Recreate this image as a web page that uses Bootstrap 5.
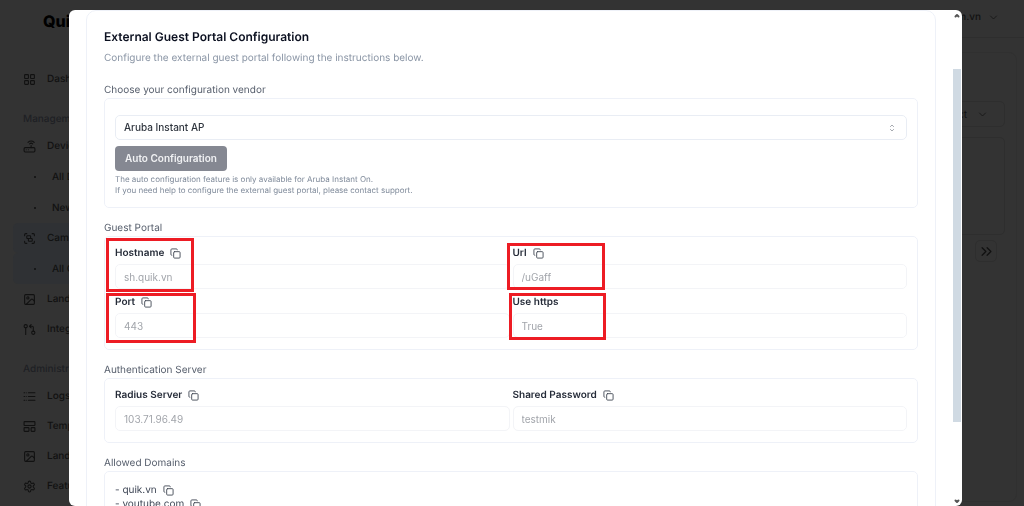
<!DOCTYPE html>
<html lang="en">
<head>
<meta charset="utf-8">
<meta name="viewport" content="width=device-width, initial-scale=1">
<title>External Guest Portal Configuration</title>
<link href="https://cdn.jsdelivr.net/npm/bootstrap@5.3.0/dist/css/bootstrap.min.css" rel="stylesheet">
<style>
  body { font-family: Inter, "Liberation Sans", sans-serif; font-size: 10px; line-height: 16px; background: #333; color: #111; overflow: hidden; text-rendering: geometricPrecision; }
  svg { fill: none; stroke: currentColor; stroke-width: 2; stroke-linecap: round; stroke-linejoin: round; flex: none; }
  a { color: inherit; text-decoration: none; }

  /* dimmed page */
  .side { width: 200px; padding: 0 13px; font-weight: 500; }
  .brand { font-size: 16px; font-weight: 800; line-height: 24px; margin: 9px 0 31px 30px; color: #000; }
  .side-item { height: 30px; gap: 11px; padding-left: 10px; border-radius: 5px; white-space: nowrap; }
  .side-sub { height: 31px; gap: 16px; padding-left: 21px; border-radius: 5px; white-space: nowrap; }
  .side-sub::before { content: ""; width: 2px; height: 2px; border-radius: 50%; background: currentColor; }
  .current { background: #2f3134; }
  .side-head { margin: 17px 0 4px 10px; color: #1e2024; }
  .topbar { height: 38px; padding: 0 26px 3px 0; border-bottom: 1px solid #2e2e2e; font-weight: 500; }
  .page-card { margin: 14px 7px 4px; padding: 48px 11px 0; border: 1px solid #303030; border-radius: 8px; }
  .dim-box { border: 1px solid #2e2e2e; border-radius: 5px; background: none; color: inherit; }
  .filter { height: 26px; width: 90px; padding: 0 17px; gap: 11px; }
  .listing { height: 98px; margin: 10px 0 5px; }
  .pager { width: 22px; height: 22px; padding: 0; }

  /* dialog */
  .dialog-wrap { position: fixed; inset: 10px 62px 0 69px; }
  .dialog { background: #fff; border-radius: 6px; color: #3f4756; }
  .dialog-body { padding: 0 16px 0 17px; }
  .panel { border: 1px solid #eef1f8; border-radius: 10px; padding: 17px 17px 0; min-height: 760px; }
  h1 { font-size: 12px; line-height: 18px; font-weight: 600; color: #0b1020; margin: 0 0 4px; }
  .intro { color: #8a95a5; margin: 0 0 16px; }
  fieldset { margin-bottom: 12px; }
  legend { font-size: 10px; line-height: 16px; margin: 0; color: #565e6c; float: none; }
  .box { border: 1px solid #eef1f8; border-radius: 5px; padding: 8px 10px 11px; }
  .pick { padding-top: 16px; }
  .form-control, .form-select { font-size: 10px; line-height: 15px; height: 25px; padding: 4px 8px; border: 1px solid #f3f4f7; border-radius: 5px; }
  .form-control:disabled { background: #fff; color: #a2a5ab; opacity: 1; }
  .form-select { color: #30363f; font-weight: 500; border-color: #e9edf4; background-size: 6px 8px; background-position: right 11px center;
    background-image: url("data:image/svg+xml,%3Csvg xmlns='http://www.w3.org/2000/svg' viewBox='0 0 8 10' fill='none' stroke='%23888d96'%3E%3Cpath d='M1.5 3.5 4 1l2.500 2.500M1.500 6.500 4 9l2.500-2.500'/%3E%3C/svg%3E"); }
  .btn-auto, .btn-auto:disabled { font-size: 10px; line-height: 15px; font-weight: 600; height: 25px; padding: 4px 10px; margin: 6px 0 3px; border: 0; border-radius: 4px; background: #858892; color: #f1f2f4; opacity: 1; }
  .hint { font-size: 8px; line-height: 11px; color: #7f8a9a; margin: 0; }
  .fields { display: grid; grid-template-columns: 1fr 1fr; gap: 5px 3px; }
  .field-label { font-weight: 600; color: #252b38; line-height: 16px; }
  .label-row { gap: 6px; margin-bottom: 3px; height: 16px; }
  .copy { border: 0; background: none; padding: 0; display: flex; color: #454b58; }
  .domains { padding-top: 11px; }
  .domains li { gap: 6px; height: 14px; }

  /* red annotation frames drawn over the fields */
  .frame { position: absolute; border: 3px solid #ed1c24; pointer-events: none; }
  .frame-host { left: -9px; top: -7px; width: 88px; height: 54px; }
  .frame-port { left: -9px; top: -1px; width: 90px; height: 50px; }
  .frame-url { left: -6px; top: -2px; width: 98px; height: 47px; }
  .frame-https { left: -4px; top: -1px; width: 97px; height: 47px; }

  .scroller { width: 10px; padding: 3px 1px 2px 0; color: #555; }
  .track { min-height: 0; padding-top: 51px; }
  .thumb { width: 8px; height: 82%; background: #d0dae3; }
</style>
</head>
<body>
<svg class="d-none" aria-hidden="true">
  <symbol id="copy" viewBox="0 0 24 24"><rect x="8" y="8" width="14" height="14" rx="2"/><path d="M4 16c-1.100 0-2-.9-2-2V4c0-1.100.9-2 2-2h10c1.100 0 2 .9 2 2"/></symbol>
  <symbol id="picture" viewBox="0 0 24 24"><rect x="3" y="3" width="18" height="18" rx="2"/><circle cx="9" cy="9" r="2"/><path d="m21 15-3.100-3.100a2 2 0 0 0-2.800 0L6 21"/></symbol>
  <symbol id="down" viewBox="0 0 24 24"><path d="m4 8 8 8 8-8"/></symbol>
</svg>

<div class="d-flex vh-100">
  <nav class="side" aria-label="Main">
    <div class="brand">Quik</div>
    <a href="#" class="side-item d-flex align-items-center"><svg width="13" height="13" viewBox="0 0 24 24"><rect x="3" y="3" width="7" height="7" rx="1"/><rect x="14" y="3" width="7" height="7" rx="1"/><rect x="14" y="14" width="7" height="7" rx="1"/><rect x="3" y="14" width="7" height="7" rx="1"/></svg>Dashboard</a>
    <div class="side-head">Management</div>
    <a href="#" class="side-item d-flex align-items-center"><svg width="13" height="13" viewBox="0 0 24 24"><rect x="2" y="14" width="20" height="8" rx="2"/><path d="M6 18h.01M10 18h.01M15 10v4M17.800 7.200a4 4 0 0 0-5.600 0M20.600 4.300a8 8 0 0 0-11.300 0"/></svg>Devices</a>
    <a href="#" class="side-sub d-flex align-items-center">All Devices</a>
    <a href="#" class="side-sub d-flex align-items-center">New Device</a>
    <a href="#" class="side-item current d-flex align-items-center"><svg width="13" height="13" viewBox="0 0 24 24"><path d="M3 7V5a2 2 0 0 1 2-2h2M17 3h2a2 2 0 0 1 2 2v2M21 17v2a2 2 0 0 1-2 2h-2M7 21H5a2 2 0 0 1-2-2v-2"/><rect x="7" y="7" width="7" height="5" rx="1"/><rect x="10" y="12" width="7" height="5" rx="1"/></svg>Campaigns</a>
    <a href="#" class="side-sub current d-flex align-items-center">All Camp.</a>
    <a href="#" class="side-item d-flex align-items-center"><svg width="13" height="13"><use href="#picture"/></svg>Landing</a>
    <a href="#" class="side-item d-flex align-items-center"><svg width="13" height="13" viewBox="0 0 24 24"><circle cx="5" cy="6" r="3"/><path d="M5 9v12M12 6h5a2 2 0 0 1 2 2v7M15 3l-3 3 3 3"/><circle cx="19" cy="18" r="3"/></svg>Integrations</a>
    <div class="side-head">Administration</div>
    <a href="#" class="side-item d-flex align-items-center"><svg width="13" height="13" viewBox="0 0 24 24"><path d="M10 5h12M10 12h12M10 19h12M2 5h1M2 12h1M2 19h1M6 5h.01M6 12h.01M6 19h.01"/></svg>Logs</a>
    <a href="#" class="side-item d-flex align-items-center"><svg width="13" height="13" viewBox="0 0 24 24"><rect x="2" y="3" width="20" height="7" rx="1"/><rect x="2" y="14" width="9" height="7" rx="1"/><rect x="15" y="14" width="7" height="7" rx="1"/></svg>Templates</a>
    <a href="#" class="side-item d-flex align-items-center"><svg width="13" height="13"><use href="#picture"/></svg>Landing</a>
    <a href="#" class="side-item d-flex align-items-center"><svg width="13" height="13" viewBox="0 0 24 24"><path d="M12.200 2h-.4a2 2 0 0 0-2 2v.2a2 2 0 0 1-1 1.700l-.4.3a2 2 0 0 1-2 0l-.2-.1a2 2 0 0 0-2.700.7l-.2.400a2 2 0 0 0 .7 2.700l.2.100a2 2 0 0 1 1 1.700v.5a2 2 0 0 1-1 1.800l-.2.100a2 2 0 0 0-.7 2.700l.2.400a2 2 0 0 0 2.700.7l.2-.1a2 2 0 0 1 2 0l.4.300a2 2 0 0 1 1 1.700v.2a2 2 0 0 0 2 2h.4a2 2 0 0 0 2-2v-.2a2 2 0 0 1 1-1.700l.4-.3a2 2 0 0 1 2 0l.2.100a2 2 0 0 0 2.700-.7l.2-.4a2 2 0 0 0-.7-2.700l-.2-.1a2 2 0 0 1-1-1.800v-.5a2 2 0 0 1 1-1.700l.2-.1a2 2 0 0 0 .7-2.700l-.2-.4a2 2 0 0 0-2.700-.7l-.2.100a2 2 0 0 1-2 0l-.4-.3a2 2 0 0 1-1-1.700V4a2 2 0 0 0-2-2z"/><circle cx="12" cy="12" r="3"/></svg>Features</a>
  </nav>
  <main class="flex-grow-1 d-flex flex-column">
    <div class="topbar d-flex align-items-center justify-content-end gap-2"><span>m.vn</span><svg width="9" height="9" viewBox="0 0 24 24" stroke-width="3"><use href="#down"/></svg></div>
    <div class="page-card flex-grow-1">
      <div class="d-flex justify-content-end"><button type="button" class="dim-box filter d-flex align-items-center justify-content-end">Select<svg width="9" height="9"><use href="#down"/></svg></button></div>
      <div class="dim-box listing"></div>
      <div class="d-flex justify-content-end pe-2"><button type="button" aria-label="Last page" class="dim-box pager d-flex align-items-center justify-content-center"><svg width="15" height="15" viewBox="0 0 24 24"><path d="m5 18 6-6-6-6M13 18l6-6-6-6"/></svg></button></div>
    </div>
  </main>
</div>

<div class="dialog-wrap d-flex">
  <div class="dialog d-flex w-100 overflow-hidden" role="dialog" aria-labelledby="dialogTitle">
    <form class="dialog-body flex-grow-1">
      <div class="panel">
        <h1 id="dialogTitle">External Guest Portal Configuration</h1>
        <p class="intro">Configure the external guest portal following the instructions below.</p>

        <fieldset>
          <legend><label for="vendor">Choose your configuration vendor</label></legend>
          <div class="box pick">
            <select class="form-select" id="vendor"><option>Aruba Instant AP</option></select>
            <button type="button" class="btn btn-auto" disabled>Auto Configuration</button>
            <p class="hint">The auto configuration feature is only available for Aruba Instant On.<br>If you need help to configure the external guest portal, please contact support.</p>
          </div>
        </fieldset>

        <fieldset>
          <legend>Guest Portal</legend>
          <div class="box fields">
            <div class="position-relative">
              <div class="label-row d-flex align-items-center"><label class="field-label" for="host">Hostname</label><button type="button" class="copy" aria-label="Copy hostname"><svg width="11" height="11"><use href="#copy"/></svg></button></div>
              <input class="form-control" id="host" value="sh.quik.vn" disabled>
              <span class="frame frame-host"></span>
            </div>
            <div class="position-relative">
              <div class="label-row d-flex align-items-center"><label class="field-label" for="url">Url</label><button type="button" class="copy" aria-label="Copy url"><svg width="11" height="11"><use href="#copy"/></svg></button></div>
              <input class="form-control" id="url" value="/uGaff" disabled>
              <span class="frame frame-url"></span>
            </div>
            <div class="position-relative">
              <div class="label-row d-flex align-items-center"><label class="field-label" for="port">Port</label><button type="button" class="copy" aria-label="Copy port"><svg width="11" height="11"><use href="#copy"/></svg></button></div>
              <input class="form-control" id="port" value="443" disabled>
              <span class="frame frame-port"></span>
            </div>
            <div class="position-relative">
              <div class="label-row d-flex align-items-center"><label class="field-label" for="https">Use https</label></div>
              <input class="form-control" id="https" value="True" disabled>
              <span class="frame frame-https"></span>
            </div>
          </div>
        </fieldset>

        <fieldset>
          <legend>Authentication Server</legend>
          <div class="box fields">
            <div>
              <div class="label-row d-flex align-items-center"><label class="field-label" for="radius">Radius Server</label><button type="button" class="copy" aria-label="Copy radius server"><svg width="11" height="11"><use href="#copy"/></svg></button></div>
              <input class="form-control" id="radius" value="103.71.96.49" disabled>
            </div>
            <div>
              <div class="label-row d-flex align-items-center"><label class="field-label" for="secret">Shared Password</label><button type="button" class="copy" aria-label="Copy shared password"><svg width="11" height="11"><use href="#copy"/></svg></button></div>
              <input class="form-control" id="secret" value="testmik" disabled>
            </div>
          </div>
        </fieldset>

        <fieldset>
          <legend>Allowed Domains</legend>
          <ul class="box domains list-unstyled">
            <li class="d-flex align-items-center">- quik.vn<button type="button" class="copy" aria-label="Copy quik.vn"><svg width="11" height="11"><use href="#copy"/></svg></button></li>
            <li class="d-flex align-items-center">- youtube.com<button type="button" class="copy" aria-label="Copy youtube.com"><svg width="11" height="11"><use href="#copy"/></svg></button></li>
          </ul>
        </fieldset>
      </div>
    </form>
    <div class="scroller d-flex flex-column align-items-center" aria-hidden="true">
      <svg width="6" height="5" viewBox="0 0 6 5"><path d="M1.500 3.500 3 2l1.500 1.500"/></svg>
      <div class="track flex-grow-1"><div class="thumb"></div></div>
      <svg width="6" height="5" viewBox="0 0 6 5"><path d="M1.500 1.500 3 3l1.500-1.500"/></svg>
    </div>
  </div>
</div>
<script src="https://cdn.jsdelivr.net/npm/bootstrap@5.3.0/dist/js/bootstrap.bundle.min.js"></script>
</body>
</html>
